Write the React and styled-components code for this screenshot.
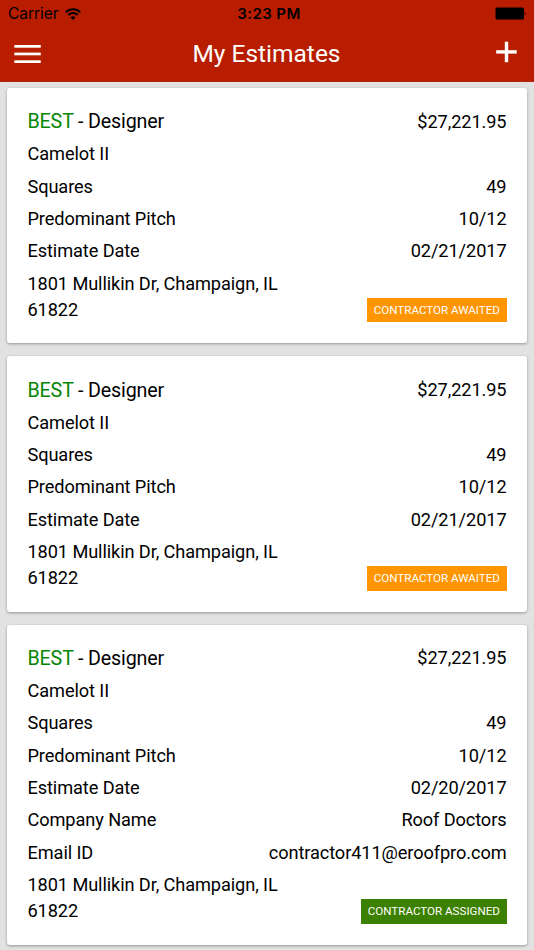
import React from 'react';
import styled, { createGlobalStyle } from 'styled-components';

const GlobalStyle = createGlobalStyle`
  * {
    box-sizing: border-box;
  }
  body {
    margin: 0;
    background-color: #e2e2e2;
    font-family: Roboto, sans-serif;
    color: #000;
  }
`;

const Screen = styled.div`
  width: 534px;
  height: 950px;
  overflow: hidden;
  background-color: #e2e2e2;
`;

const Header = styled.header`
  height: 82px;
  background-color: #b91d00;
  border-bottom: 1px solid #b5250d;
`;

const StatusBar = styled.div`
  height: 28px;
  padding: 0 7px 0 8px;
  display: grid;
  grid-template-columns: 1fr auto 1fr;
  align-items: center;
  font-family: Inter, sans-serif;
`;

const Carrier = styled.div`
  display: flex;
  align-items: center;
  gap: 7px;
  margin-top: -1px;
  font-size: 15.6px;
  letter-spacing: -0.1px;
`;

const Clock = styled.div`
  margin-top: -1px;
  font-size: 15px;
  font-weight: 600;
  letter-spacing: 0.4px;
  padding-left: 3px;
`;

const Battery = styled.svg`
  justify-self: end;
  margin-top: -1px;
`;

const NavBar = styled.nav`
  height: 53px;
  padding: 0 16px 0 14px;
  display: grid;
  grid-template-columns: 28px 1fr 23px;
  align-items: center;
`;

const Title = styled.h1`
  margin: -2px 0 0;
  padding-right: 4px;
  font-size: 24.5px;
  font-weight: 400;
  line-height: 50px;
  text-align: center;
  color: #fff;
`;

const NavIcon = styled.svg`
  display: block;
  margin-top: ${props => props.$top || 0}px;
`;

const List = styled.main`
  padding: 6px 7px;
`;

const Card = styled.section`
  margin-bottom: 13.1px;
  padding: 17.5px 20.5px 18.1px;
  background-color: #fff;
  border-radius: 3px;
  box-shadow: 0 1px 3px rgba(0, 0, 0, 0.35);
`;

const Row = styled.div`
  height: 32.3px;
  display: flex;
  justify-content: space-between;
  align-items: center;
  font-size: 18.2px;
  letter-spacing: -0.1px;
`;

const Name = styled.span`
  font-size: 19.7px;
  letter-spacing: -0.17px;
`;

const Price = styled.span`
  padding-bottom: 1px;
`;

const Grade = styled.span`
  color: #068506;
`;

const Footer = styled.div`
  height: 58.2px;
  padding: 3.2px 0 2.8px;
  display: flex;
  justify-content: space-between;
  align-items: flex-end;
`;

const Address = styled.div`
  width: 270px;
  font-size: 18.2px;
  line-height: 25.8px;
  letter-spacing: -0.1px;
`;

const Badge = styled.span`
  height: 24.5px;
  padding: 0 6.6px;
  font-size: 11.6px;
  line-height: 24px;
  color: #fff;
  background-color: ${props => (props.$assigned ? '#3c8000' : '#ff9500')};
`;

const estimates = [
  { id: 1, date: '02/21/2017' },
  { id: 2, date: '02/21/2017' },
  { id: 3, date: '02/20/2017', company: 'Roof Doctors', email: 'contractor411@eroofpro.com' },
];

const Field = ({ label, value }) => (
  <Row>
    <span>{label}</span>
    <span>{value}</span>
  </Row>
);

const EstimateCard = ({ date, company, email }) => (
  <Card>
    <Row>
      <Name><Grade>BEST</Grade> - Designer</Name>
      <Price>$27,221.95</Price>
    </Row>
    <Field label="Camelot II" />
    <Field label="Squares" value="49" />
    <Field label="Predominant Pitch" value="10/12" />
    <Field label="Estimate Date" value={date} />
    {company && <Field label="Company Name" value={company} />}
    {email && <Field label="Email ID" value={email} />}
    <Footer>
      <Address>1801 Mullikin Dr, Champaign, IL 61822</Address>
      <Badge $assigned={!!company}>{company ? 'CONTRACTOR ASSIGNED' : 'CONTRACTOR AWAITED'}</Badge>
    </Footer>
  </Card>
);

const App = () => (
  <>
    <GlobalStyle />
    <Screen>
      <Header>
        <StatusBar>
          <Carrier>
            <span>Carrier</span>
            <svg width="16" height="12" viewBox="0 0 16 12" fill="none" stroke="#000" strokeWidth="2">
              <path d="M.8 4.3a10.2 10.2 0 0 1 14.4 0" />
              <path d="M3.3 7a6.7 6.7 0 0 1 9.4 0" />
              <path d="M8 12 5.5 9.4a3.6 3.6 0 0 1 5 0z" fill="#000" stroke="none" />
            </svg>
          </Carrier>
          <Clock>3:23 PM</Clock>
          <Battery width="32" height="13" viewBox="0 0 32 13">
            <rect x="0.5" y="0.5" width="28.5" height="12" rx="1.5" />
            <path d="M29.8 4.5q1.6 2 0 4z" />
          </Battery>
        </StatusBar>
        <NavBar>
          <NavIcon $top={-1} width="28" height="20" viewBox="0 0 28 20" fill="#fff">
            <rect x="0.3" y="1" width="26.5" height="2.7" />
            <rect x="0.3" y="8.6" width="26.5" height="2.7" />
            <rect x="0.3" y="16.3" width="26.5" height="2.7" />
          </NavIcon>
          <Title>My Estimates</Title>
          <NavIcon $top={-5} width="23" height="22" viewBox="0 0 23 22" fill="#fff">
            <rect x="1.2" y="9.2" width="20.5" height="3.4" />
            <rect x="9.8" y="0.7" width="3.4" height="20.5" />
          </NavIcon>
        </NavBar>
      </Header>
      <List>
        {estimates.map(item => <EstimateCard key={item.id} {...item} />)}
      </List>
    </Screen>
  </>
);

export default App;
